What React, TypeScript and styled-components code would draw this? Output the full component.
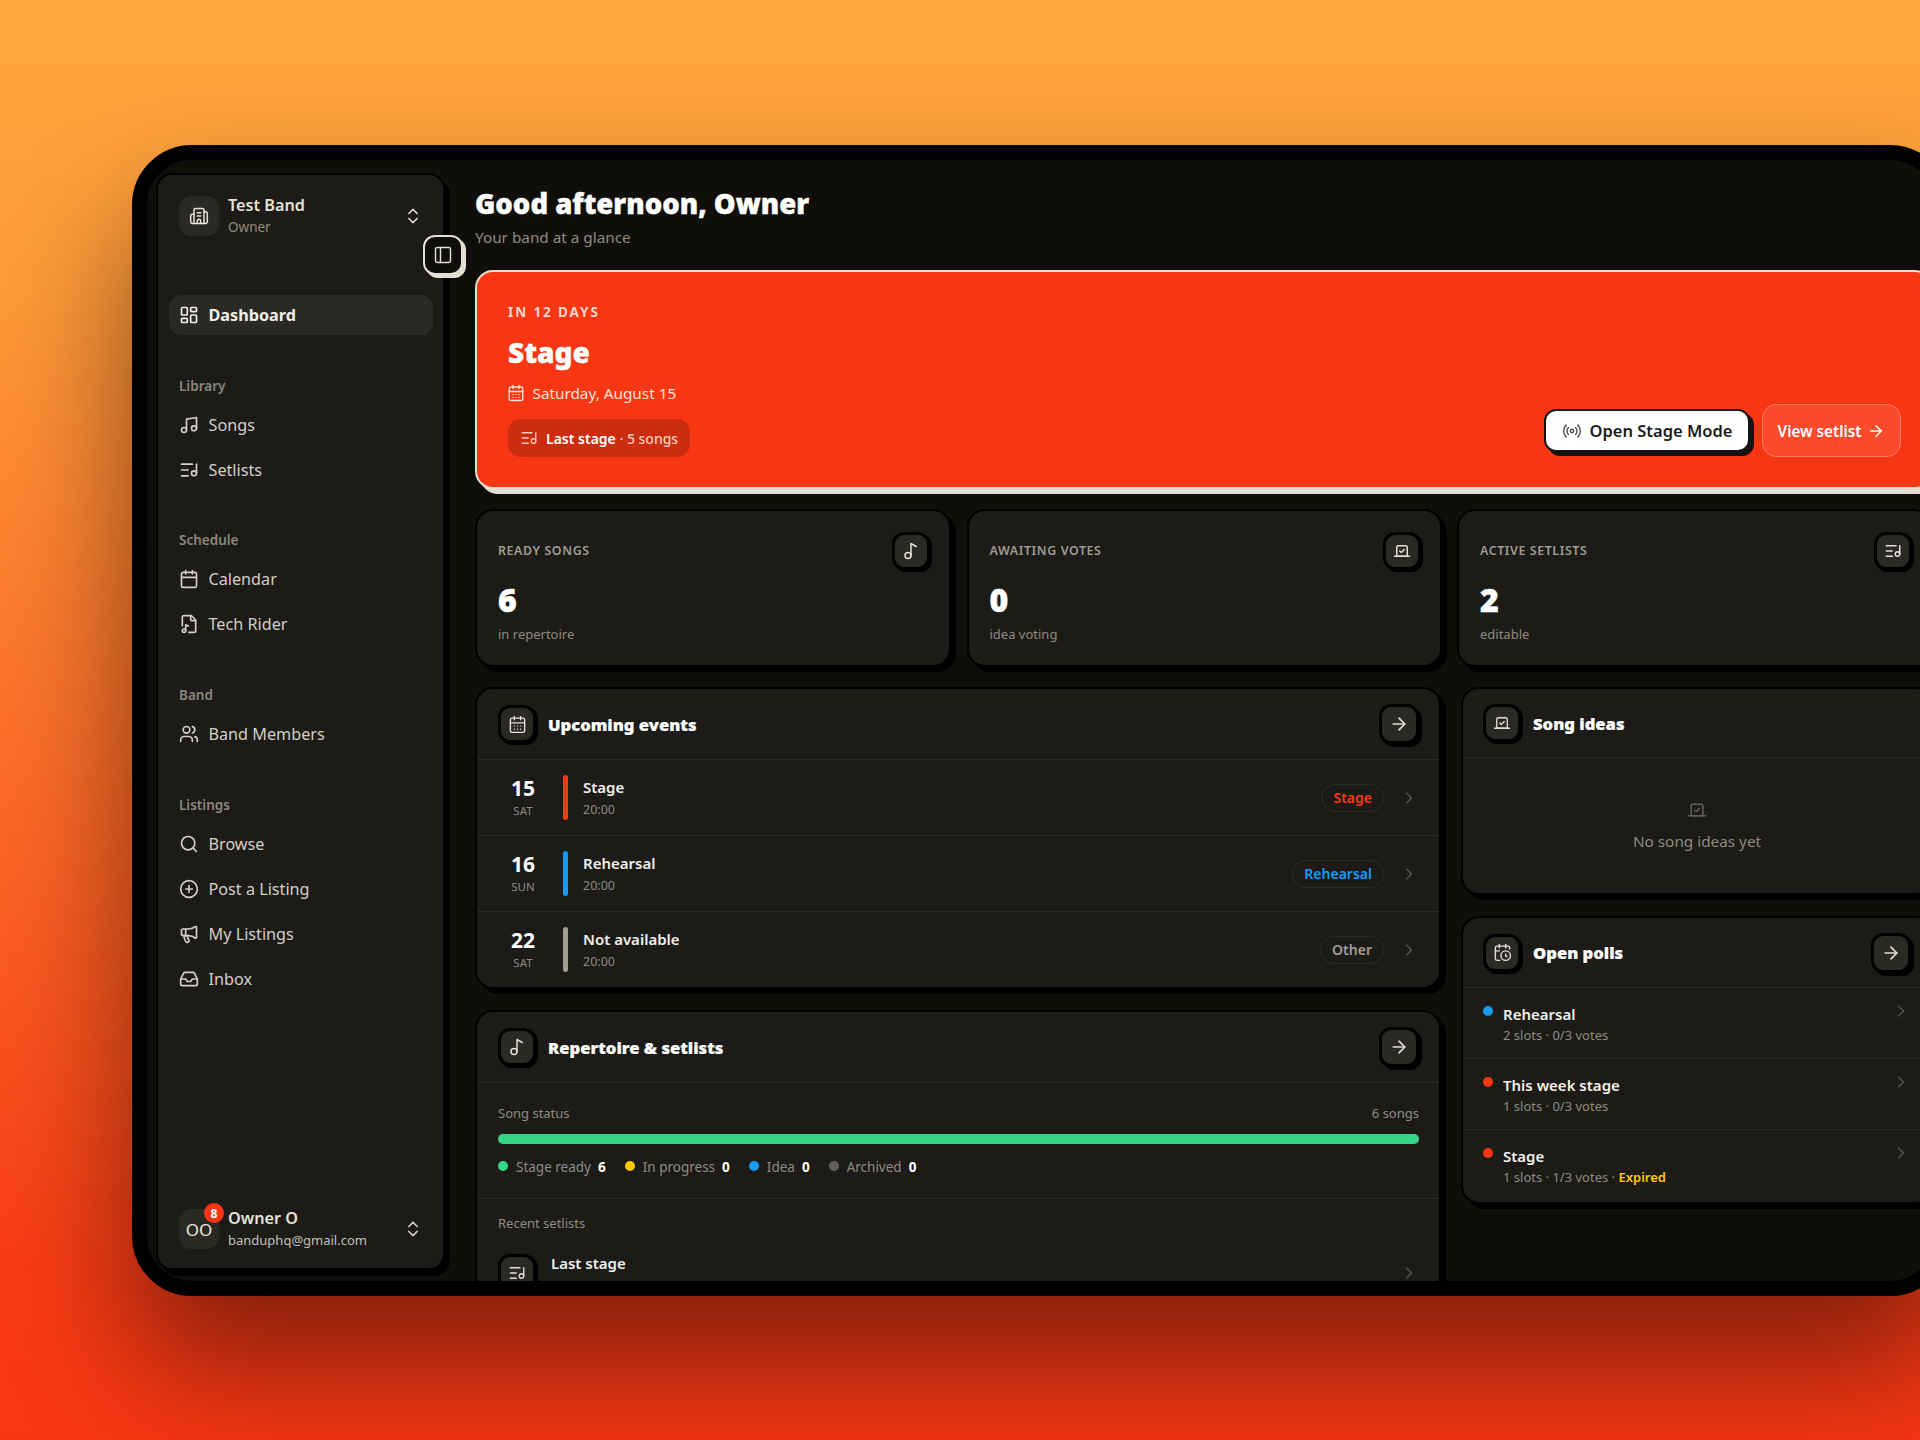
import React from 'react'
import styled, { createGlobalStyle } from 'styled-components'
import {
  ArrowRight, Building2, CalendarClock, CalendarDays, Calendar, ChevronRight, ChevronsUpDown,
  CirclePlus, FileMusic, Inbox, LayoutDashboard, ListMusic, Megaphone, Music, Music2, PanelLeft,
  Radio, Search, Users, Vote,
} from 'lucide-react'

const font = '"Noto Sans", "Open Sans", sans-serif'

const GlobalStyle = createGlobalStyle`
  html, body { margin: 0; padding: 0; height: 1440px; overflow: hidden; }
  body { font-family: ${font}; }
  * { box-sizing: border-box; }
`

const Backdrop = styled.div`
  width: 1920px;
  height: 1440px;
  overflow: hidden;
  padding: 145px 0 0 132px;
  background: linear-gradient(180deg, #ffa73e 0%, #fe9a38 20%, #f93c15 88%, #f93714 100%);
`

const Frame = styled.div`
  width: 1818px;
  height: 1151px;
  display: flex;
  align-items: flex-start;
  background: #0f0e0b;
  border: 15px solid #000;
  border-radius: 60px;
  overflow: hidden;
  box-shadow: 0 70px 130px rgba(0, 0, 0, 0.48);
`

const Sidebar = styled.aside`
  position: relative;
  flex: 0 0 289px;
  height: 1097px;
  margin: 13px 0 0 9px;
  display: flex;
  flex-direction: column;
  background: #1c1b18;
  border: 2px solid #000;
  border-radius: 16px;
  box-shadow: 5px 6px 0 #000;
`

const SideAccount = styled.div<{ $bottom?: boolean }>`
  display: flex;
  align-items: center;
  gap: 9px;
  padding: ${p => (p.$bottom ? '0 20px 17px 21px' : '19px 20px 0 21px')};
  margin-top: ${p => (p.$bottom ? 'auto' : '0')};
`

const Avatar = styled.div`
  position: relative;
  width: 40px;
  height: 40px;
  flex: none;
  display: flex;
  align-items: center;
  justify-content: center;
  background: #2b2924;
  border-radius: 12px;
  color: #ebe7dd;
  font-size: 17px;
`

const Badge = styled.span`
  position: absolute;
  left: 25px;
  top: -6px;
  width: 20px;
  height: 20px;
  display: flex;
  align-items: center;
  justify-content: center;
  background: #f93714;
  border-radius: 50%;
  color: #fff;
  font-size: 12px;
  font-weight: 700;
`

const AccountText = styled.div`
  flex: 1;
  min-width: 0;
`

const AccountName = styled.div`
  color: #e6e2d9;
  font-size: 16.2px;
  font-weight: 600;
  line-height: 22px;
`

const AccountSub = styled.div`
  color: #8f8b80;
  font-size: 13.5px;
  line-height: 22px;
`

const AccountMail = styled(AccountSub)`
  color: #c4c0b6;
  font-size: 13px;
`

const ToggleButton = styled.button`
  position: absolute;
  left: 265px;
  top: 60px;
  width: 40px;
  height: 40px;
  padding: 0;
  display: flex;
  align-items: center;
  justify-content: center;
  background: #0f0e0b;
  color: #e4dfd3;
  border: 2px solid #e4dfd3;
  border-radius: 12px;
  box-shadow: 3px 3px 0 #e4dfd3;
`

const Nav = styled.nav`
  display: flex;
  flex-direction: column;
  gap: 5px;
  padding: 0 10px 0 11px;
  margin-top: 57px;
`

const NavLabel = styled.div`
  height: 20px;
  margin: 35.7px 0 4px 10px;
  color: #8b877d;
  font-size: 13.5px;
  font-weight: 600;
  line-height: 20px;
`

const NavItem = styled.div<{ $active?: boolean }>`
  height: 40px;
  display: flex;
  align-items: center;
  gap: 10px;
  padding: 0 9.5px;
  border-radius: 12px;
  background: ${p => (p.$active ? '#2b2924' : 'transparent')};
  color: ${p => (p.$active ? '#f2efe8' : '#d3cfc6')};
  font-size: 16.2px;
  font-weight: ${p => (p.$active ? 700 : 400)};
`

const Main = styled.main`
  flex: 1;
  min-width: 0;
  height: 1121px;
  margin-left: 30px;
  padding: 26px 2px 0 0;
  overflow: hidden;
`

const PageTitle = styled.h1`
  margin: 0;
  color: #fff;
  font-size: 27.5px;
  font-weight: 900;
  line-height: 36px;
  -webkit-text-stroke: 0.4px #fff;
`

const PageSub = styled.p`
  margin: 5px 0 23px;
  color: #8f8b80;
  font-size: 15.3px;
  line-height: 20px;
`

const Hero = styled.section`
  height: 219px;
  display: flex;
  justify-content: space-between;
  align-items: flex-end;
  padding: 31px 30px 30px 31px;
  margin-bottom: 20px;
  background: #f73613;
  border: 2px solid #e4dfd3;
  border-radius: 18px;
  box-shadow: 5px 5px 0 #e4dfd3;
`

const HeroEyebrow = styled.div`
  color: #fcd5ca;
  font-size: 13.5px;
  font-weight: 700;
  letter-spacing: 1.9px;
  line-height: 18px;
`

const HeroTitle = styled.h2`
  margin: 13px 0 12px;
  color: #fff;
  font-size: 28px;
  font-weight: 900;
  line-height: 36px;
  -webkit-text-stroke: 0.4px #fff;
`

const HeroDate = styled.div`
  display: flex;
  align-items: center;
  gap: 8px;
  margin-left: -1.5px;
  color: #fde4dc;
  font-size: 15.3px;
  line-height: 22px;
`

const HeroPill = styled.div`
  width: 182px;
  height: 38px;
  display: flex;
  align-items: center;
  gap: 8px;
  margin-top: 15px;
  padding-left: 12px;
  background: #cc2c0f;
  border-radius: 13px;
  color: #fff;
  font-size: 14px;
  font-weight: 600;
  white-space: nowrap;

  svg { color: #fbcabb; }
  span { color: #fbcabb; font-weight: 500; }
`

const HeroActions = styled.div`
  display: flex;
  align-items: center;
  gap: 12px;
`

const StageButton = styled.button`
  width: 206px;
  height: 43px;
  display: flex;
  align-items: center;
  justify-content: center;
  gap: 8px;
  padding: 0;
  background: #fff;
  color: #1c1b18;
  border: 2px solid #151412;
  border-radius: 12px;
  box-shadow: 4px 4px 0 #151412;
  font-family: ${font};
  font-size: 16.5px;
  font-weight: 600;

  svg { color: #55524c; }
`

const SetlistButton = styled.button`
  width: 139px;
  height: 53px;
  display: flex;
  align-items: center;
  justify-content: center;
  gap: 6px;
  padding: 0;
  background: #fb4a2c;
  color: #fff;
  border: 1.5px solid #fd7a62;
  border-radius: 14px;
  font-family: ${font};
  font-size: 15.2px;
  font-weight: 600;
`

const StatGrid = styled.div`
  display: grid;
  grid-template-columns: 476px 475px 1fr;
  gap: 15.5px;
  margin-bottom: 20px;
`

const Card = styled.section`
  background: #1c1b18;
  border: 2px solid #000;
  border-radius: 18px;
  box-shadow: 5px 5px 0 #000;
`

const StatCard = styled(Card)`
  padding: 20px 19px 22px 21px;
`

const StatTop = styled.div`
  height: 38px;
  display: flex;
  align-items: center;
  justify-content: space-between;
  margin-bottom: 13px;
`

const StatLabel = styled.div`
  color: #a19d92;
  font-size: 12.4px;
  font-weight: 600;
  letter-spacing: 0.6px;
`

const StatIcon = styled.div`
  width: 38px;
  height: 38px;
  flex: none;
  display: flex;
  align-items: center;
  justify-content: center;
  margin-top: 2px;
  background: #2b2924;
  color: #e4e0d6;
  border: 3px solid #000;
  border-radius: 12px;
  box-shadow: 2px 2px 0 #000;
`

const StatValue = styled.div`
  color: #fff;
  font-size: 32px;
  font-weight: 900;
  line-height: 36px;
  -webkit-text-stroke: 0.5px #fff;
`

const StatSub = styled.div`
  margin-top: 7px;
  color: #8f8b80;
  font-size: 13px;
  line-height: 18px;
`

const IconBox = styled.div`
  width: 38px;
  height: 38px;
  flex: none;
  display: flex;
  align-items: center;
  justify-content: center;
  background: #2b2924;
  color: #e4e0d6;
  border: 3px solid #000;
  border-radius: 12px;
  box-shadow: 2px 2px 0 #000;
`

const ArrowButton = styled(IconBox)`
  width: 40px;
  height: 40px;
  margin-left: auto;
  box-shadow: 3px 3px 0 #000;
`

const LowerGrid = styled.div`
  display: grid;
  grid-template-columns: 966px 472px;
  gap: 20px;
  align-items: start;
`

const Column = styled.div`
  display: flex;
  flex-direction: column;
  gap: 21px;
`

const CardHeader = styled.header<{ $height: number; $inset: number }>`
  height: ${p => p.$height}px;
  display: flex;
  align-items: center;
  gap: 12px;
  padding: 0 20px 0 ${p => p.$inset}px;
  border-bottom: 1px solid #2a2925;
`

const CardTitle = styled.h3`
  margin: 0;
  color: #fff;
  font-size: 16.6px;
  font-weight: 900;
  -webkit-text-stroke: 0.2px #fff;
`

const EventRow = styled.div`
  height: 76px;
  display: flex;
  align-items: center;
  padding: 0 20px 0 20px;
  border-bottom: 1px solid #2a2925;

  &:last-child { height: 75px; border-bottom: 0; }
`

const DayBlock = styled.div`
  width: 52px;
  flex: none;
  text-align: center;
`

const DayNumber = styled.div`
  color: #fff;
  font-size: 21px;
  font-weight: 700;
  line-height: 24px;
`

const DayName = styled.div`
  margin-top: 2px;
  color: #8f8b80;
  font-size: 11.5px;
  line-height: 18px;
`

const EventBar = styled.div<{ $color: string }>`
  width: 5px;
  height: 45px;
  flex: none;
  margin: 0 15px 0 14px;
  border-radius: 3px;
  background: ${p => p.$color};
`

const RowBody = styled.div`
  flex: 1;
  min-width: 0;
`

const RowTitle = styled.div`
  color: #f2efe8;
  font-size: 15px;
  font-weight: 600;
  line-height: 20px;
`

const RowSub = styled.div`
  margin-top: 4px;
  color: #8f8b80;
  font-size: 12.5px;
  line-height: 18px;
`

const Tag = styled.span<{ $color: string }>`
  height: 28px;
  display: flex;
  align-items: center;
  padding: 0 11px;
  margin-right: 15px;
  border: 1px solid #2d2c28;
  border-radius: 14px;
  color: ${p => p.$color};
  font-size: 14px;
  font-weight: 600;
`

const Chevron = styled(ChevronRight)`
  flex: none;
  color: #55524b;
`

const Block = styled.div<{ $divided?: boolean }>`
  padding: 21px 20px 21px 21px;
  border-bottom: ${p => (p.$divided ? '1px solid #2a2925' : '0')};
`

const BlockHead = styled.div`
  display: flex;
  justify-content: space-between;
  color: #8f8b80;
  font-size: 13px;
  line-height: 18px;
`

const ProgressTrack = styled.div`
  height: 10px;
  margin: 12px 0 13px;
  border-radius: 5px;
  background: #34d583;
`

const Legend = styled.div`
  display: flex;
  align-items: center;
  gap: 19px;
  height: 20px;
`

const LegendItem = styled.div`
  display: flex;
  align-items: center;
  color: #8f8b80;
  font-size: 13.5px;

  b {
    margin-left: 7px;
    color: #fff;
    font-weight: 700;
  }
`

const Dot = styled.i<{ $color: string }>`
  width: 10px;
  height: 10px;
  flex: none;
  border-radius: 50%;
  background: ${p => p.$color};
`

const LegendDot = styled(Dot)`
  margin: -2px 8px 0 0;
`

const RecentBlock = styled.div`
  padding: 15px 20px 0 21px;
`

const SetlistRow = styled.div`
  display: flex;
  align-items: center;
  gap: 15px;
  margin-top: 22px;
`

const SetlistBody = styled(RowBody)`
  align-self: flex-start;
  margin-top: -1px;
`

const EmptyState = styled.div`
  height: 135px;
  display: flex;
  flex-direction: column;
  align-items: center;
  justify-content: center;
  gap: 11px;
  color: #8f8b80;
  font-size: 15.3px;

  svg { color: #66635b; }
`

const PollRow = styled.div`
  height: 71px;
  display: flex;
  align-items: flex-start;
  padding: 16px 20px 0 20px;
  border-bottom: 1px solid #2a2925;

  &:last-child { height: 72px; border-bottom: 0; }
`

const PollDot = styled(Dot)`
  margin: 2px 10px 0 0;
`

const PollSub = styled(RowSub)`
  margin-top: 2px;
  font-size: 13px;

  em { color: #ffc905; font-style: normal; font-weight: 600; }
`

const PollChevron = styled(Chevron)`
  margin-top: -3px;
`

const navGroups = [
  { label: 'Library', items: [{ icon: Music, text: 'Songs' }, { icon: ListMusic, text: 'Setlists' }] },
  { label: 'Schedule', items: [{ icon: Calendar, text: 'Calendar' }, { icon: FileMusic, text: 'Tech Rider' }] },
  { label: 'Band', items: [{ icon: Users, text: 'Band Members' }] },
  {
    label: 'Listings',
    items: [
      { icon: Search, text: 'Browse' },
      { icon: CirclePlus, text: 'Post a Listing' },
      { icon: Megaphone, text: 'My Listings' },
      { icon: Inbox, text: 'Inbox' },
    ],
  },
]

const stats = [
  { label: 'READY SONGS', value: '6', sub: 'in repertoire', icon: Music2 },
  { label: 'AWAITING VOTES', value: '0', sub: 'idea voting', icon: Vote },
  { label: 'ACTIVE SETLISTS', value: '2', sub: 'editable', icon: ListMusic },
]

const events = [
  { day: '15', name: 'SAT', title: 'Stage', tag: 'Stage', color: '#f93714', tagColor: '#f93714' },
  { day: '16', name: 'SUN', title: 'Rehearsal', tag: 'Rehearsal', color: '#159bf5', tagColor: '#159bf5' },
  { day: '22', name: 'SAT', title: 'Not available', tag: 'Other', color: '#a39e94', tagColor: '#a39e94' },
]

const legend = [
  { label: 'Stage ready', value: 6, color: '#34d583' },
  { label: 'In progress', value: 0, color: '#ffc905' },
  { label: 'Idea', value: 0, color: '#159bf5' },
  { label: 'Archived', value: 0, color: '#625f59' },
]

const polls = [
  { title: 'Rehearsal', sub: '2 slots · 0/3 votes', color: '#159bf5' },
  { title: 'This week stage', sub: '1 slots · 0/3 votes', color: '#f93714' },
  { title: 'Stage', sub: '1 slots · 1/3 votes · ', color: '#f93714', expired: true },
]

const App: React.FC = () => {
  return (
    <Backdrop>
      <GlobalStyle />
      <Frame>
        <Sidebar>
          <SideAccount>
            <Avatar><Building2 size={20} strokeWidth={1.75} /></Avatar>
            <AccountText>
              <AccountName>Test Band</AccountName>
              <AccountSub>Owner</AccountSub>
            </AccountText>
            <ChevronsUpDown size={20} color="#d3cfc6" />
          </SideAccount>
          <ToggleButton><PanelLeft size={20} strokeWidth={1.75} /></ToggleButton>

          <Nav>
            <NavItem $active><LayoutDashboard size={20} />Dashboard</NavItem>
            {navGroups.map(group => (
              <React.Fragment key={group.label}>
                <NavLabel>{group.label}</NavLabel>
                {group.items.map(item => (
                  <NavItem key={item.text}><item.icon size={20} />{item.text}</NavItem>
                ))}
              </React.Fragment>
            ))}
          </Nav>

          <SideAccount $bottom>
            <Avatar>OO<Badge>8</Badge></Avatar>
            <AccountText>
              <AccountName>Owner O</AccountName>
              <AccountMail>banduphq@gmail.com</AccountMail>
            </AccountText>
            <ChevronsUpDown size={20} color="#d3cfc6" />
          </SideAccount>
        </Sidebar>

        <Main>
          <PageTitle>Good afternoon, Owner</PageTitle>
          <PageSub>Your band at a glance</PageSub>

          <Hero>
            <div>
              <HeroEyebrow>IN 12 DAYS</HeroEyebrow>
              <HeroTitle>Stage</HeroTitle>
              <HeroDate><CalendarDays size={18} strokeWidth={1.75} />Saturday, August 15</HeroDate>
              <HeroPill>
                <ListMusic size={18} strokeWidth={1.75} />
                <div>Last stage <span>· 5 songs</span></div>
              </HeroPill>
            </div>
            <HeroActions>
              <StageButton><Radio size={20} strokeWidth={1.75} />Open Stage Mode</StageButton>
              <SetlistButton>View setlist<ArrowRight size={18} strokeWidth={2} /></SetlistButton>
            </HeroActions>
          </Hero>

          <StatGrid>
            {stats.map(stat => (
              <StatCard key={stat.label}>
                <StatTop>
                  <StatLabel>{stat.label}</StatLabel>
                  <StatIcon><stat.icon size={18} strokeWidth={2} /></StatIcon>
                </StatTop>
                <StatValue>{stat.value}</StatValue>
                <StatSub>{stat.sub}</StatSub>
              </StatCard>
            ))}
          </StatGrid>

          <LowerGrid>
            <Column>
              <Card>
                <CardHeader $height={71} $inset={21}>
                  <IconBox><CalendarDays size={19} strokeWidth={1.75} /></IconBox>
                  <CardTitle>Upcoming events</CardTitle>
                  <ArrowButton><ArrowRight size={20} strokeWidth={2} /></ArrowButton>
                </CardHeader>
                {events.map(event => (
                  <EventRow key={event.day}>
                    <DayBlock>
                      <DayNumber>{event.day}</DayNumber>
                      <DayName>{event.name}</DayName>
                    </DayBlock>
                    <EventBar $color={event.color} />
                    <RowBody>
                      <RowTitle>{event.title}</RowTitle>
                      <RowSub>20:00</RowSub>
                    </RowBody>
                    <Tag $color={event.tagColor}>{event.tag}</Tag>
                    <Chevron size={20} strokeWidth={1.75} />
                  </EventRow>
                ))}
              </Card>

              <Card>
                <CardHeader $height={71} $inset={21}>
                  <IconBox><Music2 size={18} strokeWidth={2} /></IconBox>
                  <CardTitle>Repertoire &amp; setlists</CardTitle>
                  <ArrowButton><ArrowRight size={20} strokeWidth={2} /></ArrowButton>
                </CardHeader>
                <Block $divided>
                  <BlockHead><span>Song status</span><span>6 songs</span></BlockHead>
                  <ProgressTrack />
                  <Legend>
                    {legend.map(item => (
                      <LegendItem key={item.label}>
                        <LegendDot $color={item.color} />
                        {item.label}
                        <b>{item.value}</b>
                      </LegendItem>
                    ))}
                  </Legend>
                </Block>
                <RecentBlock>
                  <BlockHead><span>Recent setlists</span></BlockHead>
                  <SetlistRow>
                    <IconBox><ListMusic size={18} strokeWidth={1.75} /></IconBox>
                    <SetlistBody><RowTitle>Last stage</RowTitle></SetlistBody>
                    <Chevron size={20} strokeWidth={1.75} />
                  </SetlistRow>
                </RecentBlock>
              </Card>
            </Column>

            <Column>
              <Card>
                <CardHeader $height={69} $inset={20}>
                  <IconBox><Vote size={18} strokeWidth={1.75} /></IconBox>
                  <CardTitle>Song ideas</CardTitle>
                </CardHeader>
                <EmptyState>
                  <Vote size={20} strokeWidth={1.75} />
                  No song ideas yet
                </EmptyState>
              </Card>

              <Card>
                <CardHeader $height={70} $inset={20}>
                  <IconBox><CalendarClock size={19} strokeWidth={1.75} /></IconBox>
                  <CardTitle>Open polls</CardTitle>
                  <ArrowButton><ArrowRight size={20} strokeWidth={2} /></ArrowButton>
                </CardHeader>
                {polls.map(poll => (
                  <PollRow key={poll.title}>
                    <PollDot $color={poll.color} />
                    <RowBody>
                      <RowTitle>{poll.title}</RowTitle>
                      <PollSub>{poll.sub}{poll.expired && <em>Expired</em>}</PollSub>
                    </RowBody>
                    <PollChevron size={20} strokeWidth={1.75} />
                  </PollRow>
                ))}
              </Card>
            </Column>
          </LowerGrid>
        </Main>
      </Frame>
    </Backdrop>
  )
}

export default App
